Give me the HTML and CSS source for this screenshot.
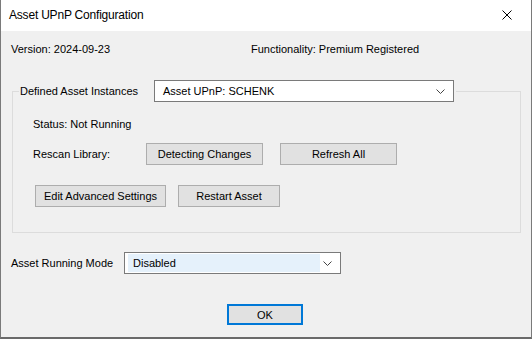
FILE: index.html
```html
<!DOCTYPE html>
<html lang="en">
<head>
  <meta charset="UTF-8" />
  <title>Asset UPnP Configuration</title>
  <link rel="stylesheet" href="styles.css">
</head>
<body>
  <div class="window">
    <div class="titlebar">
      <span class="title">Asset UPnP Configuration</span>
      <svg class="close" width="10" height="10" viewBox="0 0 10 10">
        <path d="M0.5 0.5 L9.5 9.5 M9.5 0.5 L0.5 9.5" stroke="#000" stroke-width="1" fill="none"/>
      </svg>
    </div>
    <div class="content">
      <div class="info">
        <span class="version">Version: 2024-09-23</span>
        <span>Functionality: Premium Registered</span>
      </div>

      <fieldset class="group">
        <legend class="group-head">
          <span class="group-label">Defined Asset Instances</span>
          <div class="combo combo-wide">
            <span class="combo-text">Asset UPnP: SCHENK</span>
            <svg class="chev" width="9" height="5" viewBox="0 0 9 5"><path d="M0.5 0.5 L4.5 4.5 L8.5 0.5" stroke="#444" fill="none"/></svg>
          </div>
        </legend>
        <div class="status">Status: Not Running</div>
        <div class="row rescan">
          <span class="row-label">Rescan Library:</span>
          <button class="btn btn-detect">Detecting Changes</button>
          <button class="btn btn-refresh">Refresh All</button>
        </div>
        <div class="row actions">
          <button class="btn btn-edit">Edit Advanced Settings</button>
          <button class="btn btn-restart">Restart Asset</button>
        </div>
      </fieldset>

      <div class="mode">
        <span class="mode-label">Asset Running Mode</span>
        <div class="combo combo-mode">
          <span class="combo-text selected">Disabled</span>
          <svg class="chev" width="9" height="5" viewBox="0 0 9 5"><path d="M0.5 0.5 L4.5 4.5 L8.5 0.5" stroke="#444" fill="none"/></svg>
        </div>
      </div>

      <div class="footer">
        <button class="btn btn-ok">OK</button>
      </div>
    </div>
  </div>
</body>
</html>
```

FILE: styles.css
```css
* { box-sizing: border-box; }
body {
  margin: 0;
  font-family: "Segoe UI", "Liberation Sans", Arial, sans-serif;
  font-size: 11px;
  color: #000;
  background: #fff;
}
.window {
  width: 532px;
  height: 339px;
  display: flex;
  flex-direction: column;
  border-left: 1px solid #7a7a7a;
  border-right: 1px solid #7a7a7a;
  border-bottom: 2px solid #6a6a6a;
}
.titlebar {
  height: 31px;
  background: #fff;
  display: flex;
  align-items: center;
  justify-content: space-between;
  padding: 0 19px 1px 8px;
}
.title { font-size: 12px; letter-spacing: -0.2px; }
.close { display: block; }
.content {
  flex: 1;
  background: #f0f0f0;
  padding: 11px 10px 0 10px;
}
.info { display: flex; height: 14px; line-height: 14px; }
.version { width: 240px; }

.group {
  margin: 24px 0 0 1px;
  width: 509px;
  height: 153px;
  padding: 0 0 0 20px;
  border: 1px solid #dcdcdc;
}
.group-head {
  display: flex;
  align-items: center;
  padding: 0 2px 0 1px;
  margin-left: -14px;
}
.group-label { width: 134px; }
.combo {
  height: 22px;
  border: 1px solid #7a7a7a;
  background: #fff;
  display: flex;
  align-items: center;
  justify-content: space-between;
  padding: 0 8px 0 8px;
}
.combo-wide { width: 300px; }
.chev { display: block; }

.status { margin-top: 15px; height: 14px; line-height: 14px; }
.row { display: flex; align-items: center; }
.rescan { margin-top: 12px; }
.row-label { width: 113px; }
.btn {
  font: inherit;
  color: #000;
  height: 22px;
  background: #e1e1e1;
  border: 1px solid #adadad;
  padding: 0;
}
.btn-detect { width: 117px; }
.btn-refresh { width: 117px; margin-left: 17px; }
.actions { margin-top: 20px; padding-left: 2px; }
.btn-edit { width: 131px; }
.btn-restart { width: 102px; margin-left: 12px; }

.mode {
  display: flex;
  align-items: center;
  margin-top: 19px;
}
.mode-label { width: 113px; }
.combo-mode { width: 217px; padding: 0 8px 0 3px; }
.combo-text.selected {
  background: #e5f1fb;
  width: 192px;
  height: 18px;
  line-height: 18px;
  padding-left: 5px;
}

.footer {
  display: flex;
  justify-content: center;
  margin-top: 30px;
  padding-right: 2px;
}
.btn-ok {
  width: 76px;
  height: 21px;
  border: 2px solid #0078d7;
}
```
